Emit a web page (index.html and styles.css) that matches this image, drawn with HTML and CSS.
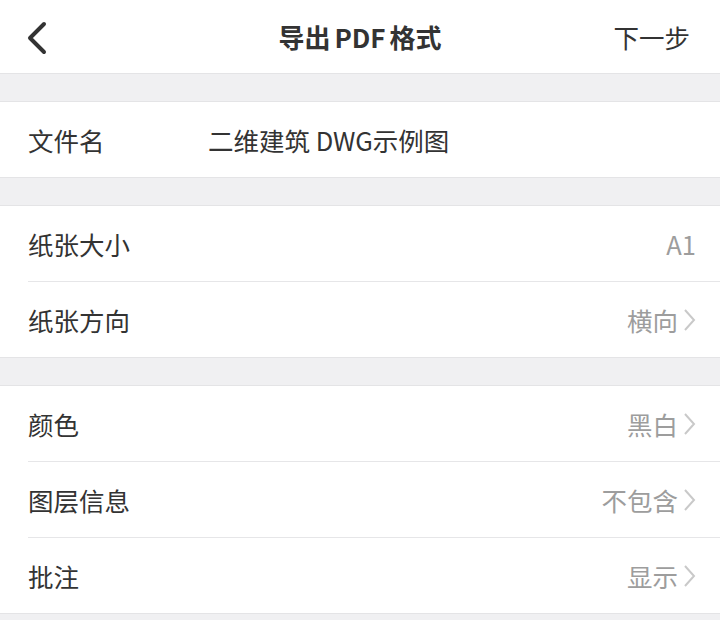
FILE: index.html
```html
<!DOCTYPE html>
<html lang="zh">
<head>
<meta charset="utf-8">
<link rel="stylesheet" href="styles.css">
</head>
<body>
<header class="nav">
  <span class="back"><svg width="22" height="34" viewBox="0 0 22 34"><path d="M18 3 L4 17 L18 31" fill="none" stroke="#333" stroke-width="4" stroke-linecap="round" stroke-linejoin="round"/></svg></span>
  <h1 class="title">导出<span class="latin">PDF</span>格式</h1>
  <span class="next">下一步</span>
</header>
<div class="gap"></div>
<section class="group">
  <div class="row"><span class="label fixed">文件名</span><span class="name">二维建筑 DWG示例图</span></div>
</section>
<div class="gap"></div>
<section class="group">
  <div class="row"><span class="label">纸张大小</span><span class="value">A1</span></div>
  <div class="row"><span class="label">纸张方向</span><span class="value">横向<svg class="chev" width="14" height="24" viewBox="0 0 14 24"><path d="M3 2 L12 12 L3 22" fill="none" stroke="#c9c9c9" stroke-width="2"/></svg></span></div>
</section>
<div class="gap"></div>
<section class="group">
  <div class="row"><span class="label">颜色</span><span class="value">黑白<svg class="chev" width="14" height="24" viewBox="0 0 14 24"><path d="M3 2 L12 12 L3 22" fill="none" stroke="#c9c9c9" stroke-width="2"/></svg></span></div>
  <div class="row"><span class="label">图层信息</span><span class="value">不包含<svg class="chev" width="14" height="24" viewBox="0 0 14 24"><path d="M3 2 L12 12 L3 22" fill="none" stroke="#c9c9c9" stroke-width="2"/></svg></span></div>
  <div class="row"><span class="label">批注</span><span class="value">显示<svg class="chev" width="14" height="24" viewBox="0 0 14 24"><path d="M3 2 L12 12 L3 22" fill="none" stroke="#c9c9c9" stroke-width="2"/></svg></span></div>
</section>
<div class="gap"></div>
</body>
</html>
```

FILE: styles.css
```css
html, body {
  margin: 0;
  padding: 0;
  background: #f0f0f2;
  font-family: "Noto Sans CJK SC", "Noto Sans", sans-serif;
  color: #333;
}
.nav {
  height: 73px;
  background: #fff;
  display: flex;
  align-items: center;
  justify-content: space-between;
  padding: 0 30px 0 26px;
  position: relative;
}
.back { display: flex; align-items: center; margin-top: 2px; }
.title {
  position: absolute;
  left: 0;
  right: 0;
  text-align: center;
  margin: 0;
  font-size: 26px;
  font-weight: 700;
  color: #333;
  pointer-events: none;
}
.latin { margin: 0 4px; }
.next { font-size: 25.5px; color: #333; }
.gap {
  height: 27px;
  border-top: 1px solid #e4e4e6;
}
.group {
  background: #fff;
  padding-left: 28px;
  border-top: 1px solid #e4e4e6;
}
.row {
  height: 75px;
  display: flex;
  align-items: center;
  justify-content: space-between;
  padding-right: 28px;
  border-bottom: 1px solid #e6e6e8;
  font-size: 25.5px;
  line-height: 1;
}
.row:last-child { border-bottom: none; }
.label { color: #333; }
.fixed { width: 180px; }
.name { flex: 1; color: #333; }
.value {
  color: #9d9d9d;
  display: flex;
  align-items: center;
  margin-right: -4px;
}
.chev { margin-left: 4px; }
```
